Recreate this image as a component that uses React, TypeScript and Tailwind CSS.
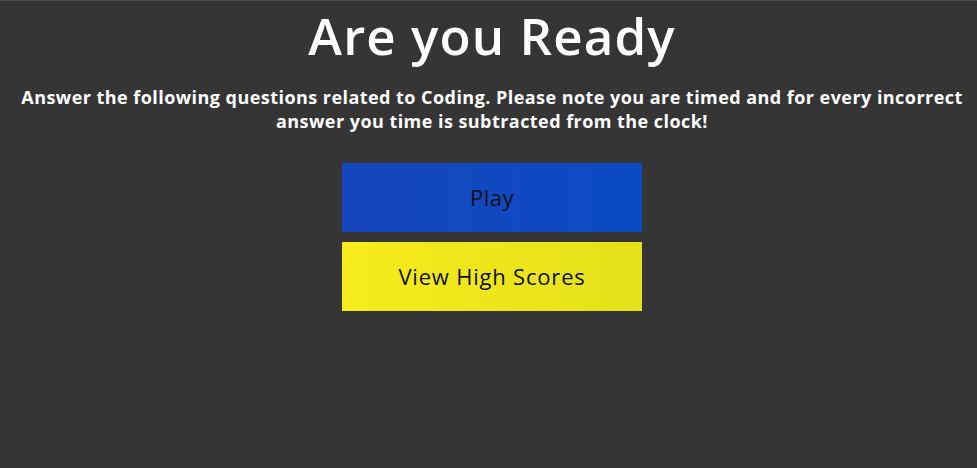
export default function App() {
  return (
    <div className="min-h-[468px] w-full bg-[#353535] border-t border-[#4a4a4a] text-white flex flex-col items-center pl-[7px]" style={{ fontFamily: "'Open Sans', Lato, sans-serif" }}>
      <h1 className="text-[51px] font-semibold leading-[64px] mt-[2px] tracking-[1.1px]">Are you Ready</h1>
      <p className="text-[18px] font-bold leading-[24px] text-center mt-[18px] w-[960px] tracking-[0.45px]">
        Answer the following questions related to Coding. Please note you are timed and for every incorrect answer you time is subtracted from the clock!
      </p>
      <div className="flex flex-col gap-[10px] mt-[30px]">
        <button className="w-[300px] h-[69px] bg-gradient-to-r from-[#1646bd] to-[#0a4bc5] text-[#111] text-[22px] tracking-[0.5px]">Play</button>
        <button className="w-[300px] h-[69px] bg-gradient-to-r from-[#f7ec1b] to-[#e5e01b] text-[#111] text-[22px] tracking-[0.8px]">View High Scores</button>
      </div>
    </div>
  );
}
